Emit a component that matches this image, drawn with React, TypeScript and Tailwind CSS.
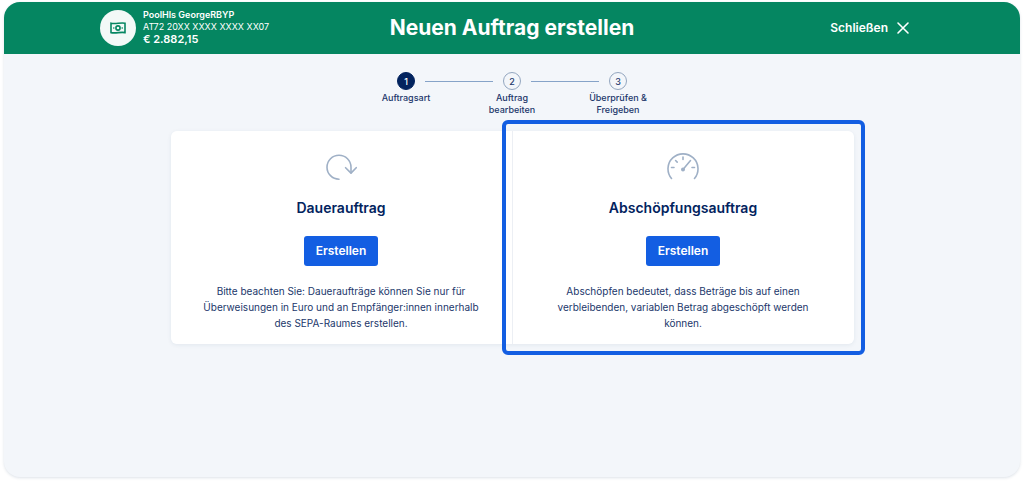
import React from 'react';
import clsx from 'clsx';

const STEPS = ['Auftragsart', 'Auftrag bearbeiten', 'Überprüfen & Freigeben'];

const BanknoteIcon = () => (
  <svg className="w-4 h-4" viewBox="0 0 16 16" fill="none" stroke="currentColor" strokeWidth="1.6" aria-hidden="true">
    <path d="M1 3.2c4.7 1 9.3-.8 14 0v9.4c-4.7-.8-9.3 1-14 0z" />
    <circle cx="8" cy="8" r="2.1" />
    <path d="M3.2 8h1.2M11.6 8h1.2" />
  </svg>
);

const RepeatIcon = () => (
  <svg className="w-8 h-8" viewBox="0 0 32 32" fill="none" stroke="currentColor" strokeWidth="1.6" strokeLinecap="round" strokeLinejoin="round" aria-hidden="true">
    <path d="M14 28.2A12 12 0 1 1 26 16.2v5.5" />
    <path d="M20.6 16.700l5.400 5.400 5.200-5.400" />
  </svg>
);

const GaugeIcon = () => (
  <svg className="w-8 h-8" viewBox="0 0 32 32" fill="none" stroke="currentColor" strokeWidth="1.6" strokeLinecap="round" aria-hidden="true">
    <path d="M4.5 27.5A15 15 0 1 1 27.5 27.5" />
    <path d="M4.5 16.500h2.500M25 16.500h2.500M8.600 9.500l1.600 1.600M16 6v2.500M16 18.500l7.500-9" />
    <circle cx="16" cy="18.5" r="1.2" fill="currentColor" />
  </svg>
);

interface StepProps {
  label: string;
  index: number;
  active: boolean;
}

const Step: React.FC<StepProps> = ({ label, index, active }) => (
  <li className="w-[106px] flex flex-col items-center" aria-current={active ? 'step' : undefined}>
    <div className="w-full flex items-center gap-2.5">
      <span className={clsx('h-px flex-1', index > 0 && 'bg-[#86a3c8]')} />
      <span
        className={clsx(
          'w-[18px] h-[18px] rounded-full border flex items-center justify-center text-[9px] leading-none font-medium',
          active ? 'bg-[#02235e] border-[#02235e] text-white' : 'border-[#93a6bf] text-[#22376b]'
        )}
      >
        {index + 1}
      </span>
      <span className={clsx('h-px flex-1', index < STEPS.length - 1 && 'bg-[#86a3c8]')} />
    </div>
    <span className="mt-0.5 px-4 text-center text-[9px] leading-3 font-medium">{label}</span>
  </li>
);

interface OrderCardProps {
  title: string;
  text: string;
  icon: React.ReactNode;
  highlighted?: boolean;
}

const OrderCard: React.FC<OrderCardProps> = ({ title, text, icon, highlighted }) => (
  <section
    className={clsx(
      'relative flex-1 bg-white flex flex-col items-center px-7 pt-5 pb-[13px] text-center',
      highlighted ? 'rounded-r-md border-l border-[#eceff4]' : 'rounded-l-md'
    )}
  >
    <span className="text-[#9fb0c6]">{icon}</span>
    <h2 className="mt-[15px] text-sm font-semibold text-[#02235e]">{title}</h2>
    <button type="button" className="mt-[18px] h-[30px] px-3 rounded-[3px] bg-[#135ee2] text-white text-xs font-semibold">
      Erstellen
    </button>
    <p className="mt-[17px] text-[10px] leading-4">{text}</p>
    {highlighted && <div className="absolute -inset-[11px] border-4 border-[#135ee2] rounded-md pointer-events-none" />}
  </section>
);

const App: React.FC = () => (
  <div className="min-h-screen flex bg-white px-1 pt-0.5 pb-[5px] font-['Inter',sans-serif] text-[#22376b]">
    <div className="flex-1 rounded-2xl overflow-hidden bg-[#f3f6fa] shadow-[0_1px_3px_rgba(30,60,100,0.15)]">
      <header className="h-[52px] px-24 grid grid-cols-[1fr_auto_1fr] items-center bg-[#058661] text-white">
        <div className="flex items-center gap-[7px]">
          <span className="w-9 h-9 shrink-0 rounded-full bg-[#f3f9f7] text-[#058661] flex items-center justify-center">
            <BanknoteIcon />
          </span>
          <div className="pb-0.5 text-[9px] leading-3 whitespace-nowrap">
            <p className="font-semibold">PoolHls GeorgeRBYP</p>
            <p>AT72 20XX XXXX XXXX XX07</p>
            <p className="text-[11px] leading-3 font-semibold">€ 2.882,15</p>
          </div>
        </div>
        <h1 className="text-[21px] leading-7 font-bold">Neuen Auftrag erstellen</h1>
        <button type="button" className="justify-self-end mr-3.5 flex items-center gap-2 text-xs font-semibold">
          Schließen
          <svg className="w-3.5 h-3.5" viewBox="0 0 14 14" stroke="currentColor" strokeWidth="1.6" strokeLinecap="round" aria-hidden="true">
            <path d="M2 2l10 10M12 2L2 12" />
          </svg>
        </button>
      </header>

      <main className="pt-[18px] px-4">
        <ol className="flex justify-center">
          {STEPS.map((label, i) => (
            <Step key={label} label={label} index={i} active={i === 0} />
          ))}
        </ol>

        <div className="mt-[15px] mx-auto max-w-[683px] flex rounded-md shadow-[0_1px_4px_rgba(30,60,100,0.08)]">
          <OrderCard
            title="Dauerauftrag"
            text="Bitte beachten Sie: Daueraufträge können Sie nur für Überweisungen in Euro und an Empfänger:innen innerhalb des SEPA-Raumes erstellen."
            icon={<RepeatIcon />}
          />
          <OrderCard
            title="Abschöpfungsauftrag"
            text="Abschöpfen bedeutet, dass Beträge bis auf einen verbleibenden, variablen Betrag abgeschöpft werden können."
            icon={<GaugeIcon />}
            highlighted
          />
        </div>
      </main>
    </div>
  </div>
);

export default App;
